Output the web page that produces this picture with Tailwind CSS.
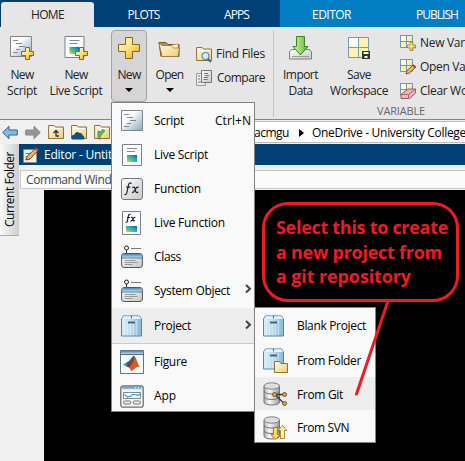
<!DOCTYPE html>
<html lang="en">
<head>
<meta charset="utf-8">
<title>Editor</title>
<script src="https://cdn.jsdelivr.net/npm/@tailwindcss/browser@4"></script>
</head>
<body class="w-[465px] h-[461px] overflow-hidden bg-black font-['Open_Sans','Noto_Sans',sans-serif] text-[12px] leading-4 text-[#222]">
<svg class="absolute w-0 h-0" aria-hidden="true">
  <defs>
    <linearGradient id="gold" x1="0" y1="0" x2="1" y2="1"><stop offset="0" stop-color="#fffbd0"/><stop offset=".5" stop-color="#fce278"/><stop offset="1" stop-color="#d9a520"/></linearGradient>
    <linearGradient id="page" x1="0" y1="0" x2="1" y2="1"><stop offset=".35" stop-color="#fbfcfd"/><stop offset="1" stop-color="#8ba9c0"/></linearGradient>
    <linearGradient id="fold" x1="0" y1="0" x2="1" y2="1"><stop offset="0" stop-color="#fffde9"/><stop offset="1" stop-color="#edcd75"/></linearGradient>
    <linearGradient id="grey" x1="0" y1="0" x2="1" y2="1"><stop offset="0" stop-color="#fff"/><stop offset="1" stop-color="#c4c6ca"/></linearGradient>
    <linearGradient id="bluebar" x1="0" y1="0" x2="0" y2="1"><stop offset="0" stop-color="#4a86b3"/><stop offset="1" stop-color="#b4dcf3"/></linearGradient>
    <linearGradient id="box" x1="0" y1="0" x2="1" y2="0"><stop offset="0" stop-color="#d9eef9"/><stop offset=".5" stop-color="#bcdcee"/><stop offset="1" stop-color="#86b6d6"/></linearGradient>
    <linearGradient id="cyl" x1="0" y1="0" x2="1" y2="0"><stop offset="0" stop-color="#b0b0b0"/><stop offset=".35" stop-color="#f8f8f8"/><stop offset="1" stop-color="#9c9c9c"/></linearGradient>
    <linearGradient id="green" x1="0" y1="0" x2="1" y2="0"><stop offset="0" stop-color="#d7f5a6"/><stop offset="1" stop-color="#5ab52b"/></linearGradient>
    <linearGradient id="parula" x1="0" y1="1" x2="1" y2="0"><stop offset="0" stop-color="#e9d437"/><stop offset=".35" stop-color="#5fbf7c"/><stop offset=".65" stop-color="#18a4bd"/><stop offset="1" stop-color="#2445c8"/></linearGradient>
    <symbol id="plus" viewBox="0 0 22 22"><path d="M7.500 .5h7v7h7v7h-7v7h-7v-7h-7v-7h7z" fill="url(#gold)" stroke="#876424"/></symbol>
    <symbol id="plus-sm" viewBox="0 0 13 13"><path d="M4.500.500h4v4h4v4h-4v4h-4v-4h-4v-4h4z" fill="url(#gold)" stroke="#8a6520"/></symbol>
    <symbol id="script" viewBox="0 0 22 22"><path d="M.5.500h21v20H.5z" fill="url(#page)" stroke="#7c8790"/><path d="M3 4.500h5M6 7.500h6M9 10.500h6M6 13.500h4M3 16.500h5" stroke="#888"/></symbol>
    <symbol id="live" viewBox="0 0 20 22"><path d="M.5.500h19v21H.5z" fill="#fcfdfe" stroke="#77828c"/><path d="M5 4.500h10M5 7.500h8" stroke="#888"/><path d="M5 11h10v7H5z" fill="url(#parula)"/></symbol>
    <symbol id="fx" viewBox="0 0 22 22"><rect x=".5" y=".5" width="21" height="21" rx="2.500" fill="url(#grey)" stroke="#777"/><path d="M10.600 5.400c-1.800-.9-2.800 0-3.200 2L5.900 14.500c-.4 1.900-1.200 2.400-2.500 1.800M5.300 9.200h4M11.400 9.600c2-1 2.400-.2 2.700 1.500s.7 4.700 3.100 2.900M17.700 9.300c-2-1-2.700.7-3.600 2.300-1 1.800-1.700 3.400-3.200 2.500" fill="none" stroke="#222" stroke-width="1.200"/></symbol>
    <symbol id="livefx" viewBox="0 0 19 24"><path d="M.5.500h18v23H.5z" fill="#fcfdfe" stroke="#77828c"/><path d="M8.500 3.500c-1.200-.5-1.800 0-2.100 1.400l-1 5c-.2 1.300-.8 1.600-1.700 1.100M5 6.500h3M9 6.600c1.400-.6 1.700.1 1.900 1.300s.5 2.800 2 1.700M13.400 6.500c-1.600-.6-2 1-2.700 2-.6.9-1 1.900-2.200 1.200" fill="none" stroke="#222" stroke-width="1.200"/><path d="M4 15h11v6H4z" fill="url(#parula)"/></symbol>
    <symbol id="class" viewBox="0 0 22 24"><path d="M5.500 5v4" stroke="#333"/><path d="M10 3.500h10" stroke="#777"/><circle cx="5.500" cy="3" r="2" fill="#fff" stroke="#222"/><rect x=".6" y="8.500" width="20.800" height="14" rx="2.500" fill="url(#grey)" stroke="#555"/><path d="M1 12.500v-1.500q0-2 2-2h16q2 0 2 2v1.500z" fill="url(#bluebar)"/><path d="M.6 13h21" stroke="#35607f" stroke-width=".8"/><path d="M3.500 15.500h11M3.500 17.500h13M3.500 19.500h8" stroke="#999"/></symbol>
    <symbol id="project" viewBox="0 0 22 22"><path d="M.5 4 2.500 .9h16L20.500 4v17H.5z" fill="url(#box)" stroke="#5686a7"/><path d="M1 4Q2 1.200 3.500 1.200h5.500Q10.500 2 10.500 4Q10.500 2 12 1.200H17.500Q19.500 1.200 20 4z" fill="#e6f3fa"/><path d="M10.500 .8V3.500" stroke="#4c7596"/><path d="M3.500 5v15.500M6.500 9v11.500M9.500 9v11.500M12.500 9v11.500M15.500 5v15.500" stroke="#e6f4fb" stroke-opacity=".5"/><path d="M7 7.500h7" stroke="#4e5860" stroke-width="1.800"/></symbol>
    <symbol id="figure" viewBox="0 0 24 24"><path d="M.5.500h23v23H.5z" fill="#fafbfc" stroke="#5d7687"/><path d="M1 1h22v3H1z" fill="url(#bluebar)"/><path d="M.5 4.500h23" stroke="#486e88"/><path d="m3 14.500 4.500-2.800L9 13l-2.800 3.500z" fill="#4b91c7"/><path d="M7.500 11.700c2.500-.4 4-5 6.500-6-1 4.500-3.600 8-7 11l-.8-.5z" fill="#245d91"/><path d="M14 5.600c2.200 1.500 3.500 8.500 6 11.700-2-1.200-3.800.2-5 1.200-1.800 1.600-2.900 2.500-4 2.500-.8-2.500-2-4.300-4-4.500 3.500-2.400 5.600-6.400 7-10.900z" fill="#d4592b"/><path d="M14 5.600c.3 3.200-.5 6.200-2.500 8.500l-2.500 3.500-2-1.100c3.500-2.200 5.500-6.600 7-10.900z" fill="#8f2b20"/></symbol>
    <symbol id="app" viewBox="0 0 24 23"><rect x=".8" y=".8" width="22.400" height="21.400" rx="2.200" fill="#f3f4f5" stroke="#69727a" stroke-width="1.300"/><path d="M1.500 1.500h21v3h-21z" fill="url(#bluebar)"/><path d="M15 2.500h1M18 2.500h1M21 2.500h1" stroke="#fff"/><path d="M3.500 7.500h17v6h-17z" fill="#fff" stroke="#808a92"/><path d="m4.500 9.500 3 2.500 3-1 2-1.500h3l2 1 2.500-1.500" fill="none" stroke="#3f9cd8" stroke-width="1.200"/><rect x="3.700" y="16" width="7" height="3" rx="1" fill="#eee" stroke="#777"/><rect x="13.300" y="16" width="7" height="3" rx="1" fill="#eee" stroke="#777"/></symbol>
    <symbol id="db" viewBox="0 0 18 24"><path d="M1 4v16c0 4 15.500 4 15.500 0V4z" fill="url(#cyl)" stroke="#737373"/><ellipse cx="8.750" cy="4" rx="7.750" ry="3.200" fill="#dedede" stroke="#808080"/><path d="M1 9c0 4 15.500 4 15.500 0M1 14.500c0 4 15.500 4 15.500 0" fill="none" stroke="#707070"/></symbol>
    <symbol id="folder" viewBox="0 0 16 16"><path d="M.6 3V1.500h5.500L7.500 3h8v11.500H.6z" fill="url(#fold)" stroke="#92702f"/><path d="M2 4.500h12" stroke="#fff"/></symbol>
    <symbol id="grid" viewBox="0 0 14 14"><path d="M.5.500h12v12H.5z" fill="#fff2a8"/><path d="M.5.500h6v6h-6z" fill="#fff"/><path d="M.5.500h12v12H.5zM6.500.500v12M.5 6.500h12" fill="none" stroke="#6f94b0"/></symbol>
    <symbol id="chev" viewBox="0 0 7 10"><path d="m1 1 4 3.700-4 3.700" fill="none" stroke="#444" stroke-width="2"/></symbol>
  </defs>
</svg>

<main class="relative w-[465px] h-[461px] overflow-hidden flex flex-col whitespace-nowrap">
  <nav class="h-[27px] shrink-0 flex bg-[#004077] text-white items-stretch">
    <div class="ml-px mt-[2px] w-[93px] rounded-t-[3px] bg-[#e6e6e6] text-[#222] flex items-center justify-center"><span data-w="33">HOME</span></div>
    <div class="w-[99px] pt-[2px] flex items-center justify-center"><span data-w="32">PLOTS</span></div>
    <div class="w-[87px] pt-[2px] flex items-center justify-center"><span data-w="25">APPS</span></div>
    <div class="w-[103px] pt-[2px] bg-[#007dc3] flex items-center justify-center"><span data-w="39">EDITOR</span></div>
    <div class="flex-1 pl-[33px] pt-[2px] bg-[#007dc3] flex items-center"><span data-w="42">PUBLISH</span></div>
  </nav>

  <section class="h-[92px] shrink-0 bg-[#e6e6e6] flex items-start overflow-hidden *:shrink-0">
    <div class="w-[44px] pt-[8px] flex flex-col items-center">
      <svg class="w-[26px] h-[26px]" viewBox="0 0 26 26"><use href="#script" x="1" y="1" width="22" height="22"/><use href="#plus-sm" x="12" y="12" width="13" height="13"/></svg>
      <span class="mt-[6px]" data-w="23">New</span><span data-w="30">Script</span>
    </div>
    <div class="w-[64px] pt-[8px] flex flex-col items-center">
      <svg class="w-[26px] h-[26px]" viewBox="0 0 26 26"><use href="#live" x="1" y="1" width="21" height="22"/><use href="#plus-sm" x="12" y="12" width="13" height="13"/></svg>
      <span class="mt-[6px]" data-w="23">New</span><span data-w="53">Live Script</span>
    </div>
    <div class="ml-[3px] mt-[3px] w-[36px] h-[72px] rounded-[4px] border border-[#a3a3a3] bg-[#d5d5d5] flex flex-col items-center">
      <svg class="w-[22px] h-[22px] mt-[6px]"><use href="#plus"/></svg>
      <span class="mt-[8px]" data-w="23">New</span>
      <svg class="w-[8px] h-[4px] mt-[5px]"><path d="M0 0h8L4 4z" fill="#000"/></svg>
    </div>
    <div class="w-[45px] pt-[14px] flex flex-col items-center">
      <svg class="w-[23px] h-[17px]" viewBox="0 0 23 17"><path d="M1 1.500h7l2 2h11v12H3z" fill="#bd8f48" stroke="#765321"/><path d="M6.500 5.500 20 3v12.500H3.500z" fill="#fff6cd" stroke="#b18a42" stroke-width=".6"/><path d="M1 2 4 4.500h9l2.500 2.500H21.500L20 15.500H4z" fill="url(#fold)" stroke="#936e32" stroke-width=".8"/></svg>
      <span class="mt-[9px]" data-w="28">Open</span>
      <svg class="w-[8px] h-[4px] mt-[5px]"><path d="M0 0h8L4 4z" fill="#000"/></svg>
    </div>
    <div class="ml-[4px] pt-[19px] w-[77px] flex flex-col gap-[8px]">
      <div class="h-4 flex items-center"><svg class="w-4 h-4 mr-[4px] overflow-visible"><use href="#folder"/><circle cx="9.500" cy="10" r="3.600" fill="#d2ecf9" stroke="#41779b"/><path d="m12 13 3 3" stroke="#2e688c" stroke-width="1.800"/></svg><span data-w="49">Find Files</span></div>
      <div class="h-4 flex items-center"><svg class="w-4 h-4 mr-[5px] overflow-visible"><path d="M.5 3.500h9v12h-9z" fill="#eee" stroke="#999"/><path d="M5.500.500h10v12h-10z" fill="url(#grey)" stroke="#777"/><path d="M2 6h2M2 9h2M2 12h3M8 3.500h4M9 5.500h4M8 7.500h4M7.500 9.500h4" stroke="#777"/></svg><span data-w="48">Compare</span></div>
    </div>
    <div class="w-px h-[87px] mt-[3px] bg-[#c5c5c5]"></div>
    <div class="w-[52px] pl-[1px] pt-[8px] flex flex-col items-center">
      <svg class="w-[25px] h-[26px]" viewBox="0 0 25 26"><path d="M1.500 16.500 4 14.500h17l2.500 2v7.500h-22z" fill="url(#grey)" stroke="#7c7c7c"/><path d="M4 21.500h17" stroke="#999"/><path d="M8.500 1.500h8v10H20L12.500 20 5 11.500h3.500z" fill="url(#green)" stroke="#398620"/></svg>
      <span class="mt-[6px]" data-w="35">Import</span><span data-w="24">Data</span>
    </div>
    <div class="w-[66px] pt-[8px] flex flex-col items-center">
      <svg class="w-[24px] h-[26px]" viewBox="0 0 24 26"><path d="M1.500 2.500h20v20h-20z" fill="#fff3b2"/><path d="M1.500 2.500h10v10h-10z" fill="#fffef5"/><path d="M1.500 2.500h20v20h-20zM11.500 2.500v20M1.500 12.500h20" fill="none" stroke="#6f9bb8"/><path d="M15 16h8v8h-8z" fill="#333"/><path d="M16.500 17h5v2h-5zM17.500 21h3v2h-3z" fill="#fff"/></svg>
      <span class="mt-[6px]" data-w="24">Save</span><span data-w="58">Workspace</span>
    </div>
    <div class="ml-[8px] pt-[4px] flex flex-col">
      <div class="h-6 flex items-center gap-[4px]"><svg class="w-4 h-4 overflow-visible"><use href="#grid" width="14" height="14"/><use href="#plus-sm" x="7" y="7" width="9" height="9"/></svg><span data-w="70">New Variable</span></div>
      <div class="h-6 flex items-center gap-[4px]"><svg class="w-4 h-4 overflow-visible"><use href="#grid" width="14" height="14"/><path d="m6 15 1-3.500 6-5.500 2.500 2.500L9.500 14z" fill="#f0b16d" stroke="#885333"/><path d="m13 6 2.500 2.500" stroke="#a03f4e" stroke-width="2"/></svg><span data-w="75">Open Variable</span></div>
      <div class="h-6 flex items-center gap-[4px]"><svg class="w-4 h-4 overflow-visible"><use href="#grid" width="14" height="14"/><path d="m1 11.500 7-5.500h7.500v4l-6 5.500H1z" fill="#edb4bd" stroke="#925c67"/><path d="M1 11.500h7.500l7-5.500M8.500 11.500v4" fill="none" stroke="#a46b75"/></svg><span data-w="89">Clear Workspace</span></div>
      <span class="self-start -ml-[23px] text-[11px] text-[#666]" data-w="48">VARIABLE</span>
    </div>
  </section>

  <section class="h-[25px] shrink-0 flex bg-[#f0f0f0] border-t border-[#858585] pt-px">
    <div class="w-[111px] h-[22px] shrink-0 flex items-center pl-[2px] *:shrink-0">
      <svg class="w-[16px] h-[15px]" viewBox="0 0 16 15"><path d="M.7 7.500 7 1.300V5H15.300v5H7v3.700z" fill="#85b9de" stroke="#2f658e"/></svg>
      <svg class="w-[16px] h-[15px] ml-[7px]" viewBox="0 0 16 15"><path d="M15.300 7.500 9 1.300V5H.7v5H9v3.700z" fill="#969696" stroke="#8a8a8a"/></svg>
      <svg class="w-4 h-4 ml-[7px]"><use href="#folder"/><path d="M8 12.500V7M5.500 9 8 6.500 10.500 9M8 12h3" fill="none" stroke="#333" stroke-width="1.300"/></svg>
      <svg class="w-[17px] h-4 ml-[7px]"><use href="#folder" width="16" height="16"/><path d="M1 15.500q-2-4 2.500-5Q5 6.500 8.500 9q3-.5 3.300 2.500 2.500 1.500 1 4z" fill="#0b4f87"/></svg>
      <svg class="w-4 h-4 ml-[6px]"><use href="#folder"/><path d="M6 15.500q-1-3 5-8.500L8.500 5.500 7 8 4 7v6.500z" fill="#63b95c" stroke="#337c36" stroke-width=".7"/></svg>
    </div>
    <div class="flex-1 min-w-0 h-[22px] bg-white border-y border-[#bcbcbc] flex items-center pl-[143px] pt-px text-black *:shrink-0">
      <span data-w="35">acmgu</span><svg class="w-[5px] h-[8px] ml-[10px] mr-[8px]"><path d="M0 0v8l5-4z" fill="#000"/></svg><span data-w="154">OneDrive - University College</span>
    </div>
  </section>

  <section class="flex-1 min-h-0 flex bg-[#f0f0f0]">
    <aside class="w-[19px] shrink-0">
      <div class="h-[92px] bg-linear-to-r from-[#fafafa] to-[#cecece] border-b border-[#aaa] flex items-center justify-center"><span class="[writing-mode:vertical-rl] rotate-180 text-black" data-h="75">Current Folder</span></div>
    </aside>
    <div class="flex-1 min-w-0 flex flex-col">
      <div class="h-[21px] shrink-0 flex items-center bg-[#004077] text-white pl-[4px]">
        <svg class="w-4 h-4 mr-[5px] overflow-visible"><path d="M.5 2.500h13v13H.5z" fill="#eee" stroke="#888"/><path d="M2.500 6.500h6M2.500 9.500h5M2.500 12.500h4" stroke="#777"/><path d="m3 13 1-3.500L13 1l2.500 2L7 12z" fill="#efb366" stroke="#754620"/><path d="m12.500 1.500 2.500 2" stroke="#b44247" stroke-width="2"/></svg>
        <span data-w="91">Editor - Untitled2</span>
      </div>
      <div class="h-[25px] pt-[5px] pl-px shrink-0"><div class="h-[19px] border border-r-0 border-[#c9c9c9] bg-[#fbfbfb] flex items-center pl-[5px] text-[#444]"><span data-w="101">Command Window</span></div></div>
      <div class="flex-1 ml-[25px] bg-black"></div>
    </div>
  </section>

  <div class="absolute left-[111px] top-[102px] w-[144px] h-[310px] border border-[#828282] bg-[#f9f9f9] text-black flex flex-col">
    <div class="h-[34px] flex items-center pl-[9px] pt-[2px]"><svg class="w-[22px] h-[22px] mr-[11px]"><use href="#script"/></svg><span data-w="30">Script</span><span class="ml-auto mr-[3px]" data-w="36">Ctrl+N</span></div>
    <div class="h-[34px] flex items-center pl-[10px] pt-[2px]"><svg class="w-[20px] h-[22px] mr-[12px]"><use href="#live"/></svg><span data-w="54">Live Script</span></div>
    <div class="h-[34px] flex items-center pl-[9px] pt-[2px]"><svg class="w-[22px] h-[22px] mr-[11px]"><use href="#fx"/></svg><span data-w="47">Function</span></div>
    <div class="h-[34px] flex items-center pl-[10px] pt-[2px]"><svg class="w-[19px] h-[24px] mr-[13px]"><use href="#livefx"/></svg><span data-w="71">Live Function</span></div>
    <div class="h-[34px] flex items-center pl-[9px] pt-[2px]"><svg class="w-[22px] h-[24px] mr-[11px]"><use href="#class"/></svg><span data-w="27">Class</span></div>
    <div class="h-[35px] flex items-center pl-[9px]"><svg class="w-[22px] h-[24px] mr-[11px]"><use href="#class"/></svg><span data-w="76">System Object</span><svg class="w-[7px] h-[10px] ml-auto mr-[2px] -mt-[3px]"><use href="#chev"/></svg></div>
    <div class="h-[36px] border-b border-[#cbcbcb] bg-[#ededed] flex items-center pl-[9px]"><svg class="w-[22px] h-[22px] mr-[11px]"><use href="#project"/></svg><span data-w="37">Project</span><svg class="w-[7px] h-[10px] ml-auto mr-[2px] -mt-[2px]"><use href="#chev"/></svg></div>
    <div class="h-[34px] flex items-center pl-[8px] pt-px"><svg class="w-[24px] h-[24px] mr-[10px]"><use href="#figure"/></svg><span data-w="33">Figure</span></div>
    <div class="h-[33px] flex items-center pl-[8px] pt-[3px]"><svg class="w-[24px] h-[23px] mr-[10px]"><use href="#app"/></svg><span data-w="22">App</span></div>
  </div>

  <div class="absolute left-[254px] top-[307px] w-[122px] h-[136px] border border-[#828282] bg-[#f9f9f9] text-black flex flex-col">
    <div class="h-[34px] flex items-center pl-[8px] pt-[2px]"><svg class="w-[22px] h-[22px] mr-[12px]"><use href="#project"/></svg><span data-w="69">Blank Project</span></div>
    <div class="h-[35px] flex items-center pl-[8px] pt-[2px]"><svg class="w-[25px] h-[25px] mr-[9px]"><use href="#project" width="22" height="22"/><path d="M11.500 13.500h5l1.500 2h6.500v9h-13z" fill="url(#fold)" stroke="#92702f"/></svg><span data-w="64">From Folder</span></div>
    <div class="h-[33px] bg-[#ededed] flex items-center pl-[8px] pt-[2px]"><svg class="w-[25px] h-[25px] mr-[9px]"><use href="#db" x="0" y="0" width="18" height="24"/><path d="M22 12.500H12l9 9" fill="none" stroke="#333" stroke-width="1.300"/><g fill="#d6ac3d" stroke="#765719"><circle cx="11.500" cy="12.500" r="2"/><circle cx="21.500" cy="12.500" r="2"/><circle cx="21.500" cy="21.500" r="2"/></g></svg><span data-w="46">From Git</span></div>
    <div class="h-[32px] flex items-center pl-[8px] pt-[4px]"><svg class="w-[25px] h-[25px] mr-[9px]"><use href="#db" x="0" y="0" width="18" height="24"/><path d="M10.500 11.500h4v7H17l-4.500 5-4.500-5h2.500z" fill="#fbda5c" stroke="#95701e" stroke-width=".8"/><path d="M17.500 22.500v-8H15l4.500-5 4.500 5h-2.500v8z" fill="#fff3b0" stroke="#95701e" stroke-width=".8"/></svg><span data-w="52">From SVN</span></div>
  </div>

  <svg class="absolute left-0 top-0 w-[465px] h-[461px]"><path d="M388 301 356.500 394" stroke="#ed1c24" stroke-width="3" stroke-linecap="round"/></svg>
  <div class="absolute left-[262px] top-[202px] w-[197px] h-[100px] rounded-[26px] border-3 border-[#ed1c24] bg-black text-[#ed1c24] text-[18px] font-bold leading-[24.500px] pl-[11px] pt-[10px] flex flex-col items-start">
    <span data-w="172">Select this to create</span><span data-w="166">a new project from</span><span data-w="135">a git repository</span>
  </div>
</main>
<script>
  // Tune letter spacing so each label takes its design width.
  function fitLabels() {
    document.querySelectorAll('[data-w],[data-h]').forEach(function (el) {
      var vertical = el.hasAttribute('data-h');
      var target = +(vertical ? el.dataset.h : el.dataset.w);
      el.style.letterSpacing = '0px';
      var range = document.createRange();
      range.selectNodeContents(el);
      var r = range.getBoundingClientRect();
      var size = vertical ? r.height : r.width;
      el.style.letterSpacing = (target - size) / el.textContent.length + 'px';
    });
  }
  window.addEventListener('load', function () {
    fitLabels();
    requestAnimationFrame(fitLabels);
    setTimeout(fitLabels, 50);
  });
  document.fonts.ready.then(fitLabels);
</script>
</body>
</html>
